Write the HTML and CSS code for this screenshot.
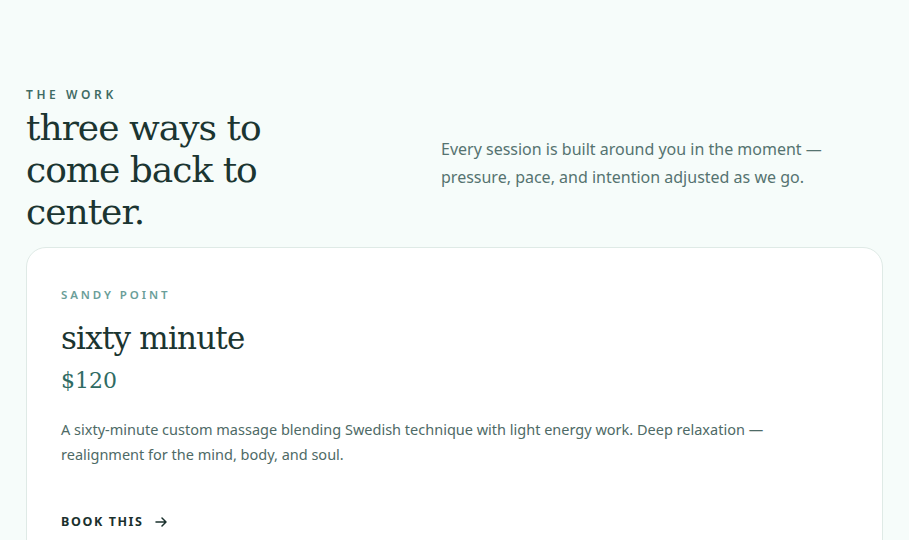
FILE: index.html
```html
<!DOCTYPE html>
<html lang="en">
  <head>
    <meta charset="UTF-8" />
    <meta name="viewport" content="width=device-width, initial-scale=1.0" />
    <title>The Work</title>
    <link rel="stylesheet" href="styles.css">
  </head>
  <body>
    <main class="work">
      <header class="work-head">
        <div>
          <p class="eyebrow">THE WORK</p>
          <h2 class="work-title">three ways to come back to center.</h2>
        </div>
        <p class="work-intro">
          Every session is built around you in the moment — pressure, pace, and intention adjusted as we go.
        </p>
      </header>

      <article class="offer">
        <p class="offer-place">SANDY POINT</p>
        <h3 class="offer-name">sixty minute</h3>
        <p class="offer-price">$120</p>
        <p class="offer-text">
          A sixty-minute custom massage blending Swedish technique with light energy work. Deep relaxation — realignment for the mind, body, and soul.
        </p>
        <a class="offer-link" href="#">
          BOOK THIS
          <svg class="arrow" width="12" height="12" viewBox="0 0 12 12" fill="none" stroke="currentColor" stroke-width="1.5" stroke-linecap="round" stroke-linejoin="round">
            <path d="M1 6h10M7 2l4 4-4 4" />
          </svg>
        </a>
      </article>
    </main>
  </body>
</html>
```

FILE: styles.css
```css
body {
  margin: 0;
  background-color: #f6fcfa;
  font-family: "Noto Sans", sans-serif;
  color: #1d3834;
}
.work {
  padding: 86px 26px 0;
}
.work-head {
  display: grid;
  grid-template-columns: 415px 1fr;
  align-items: center;
  margin-bottom: 14px;
}
.eyebrow {
  margin: 0 0 4px;
  font-size: 12px;
  font-weight: 600;
  letter-spacing: 3.6px;
  color: #3f6b64;
}
.work-title {
  margin: 0;
  max-width: 260px;
  font-family: "DejaVu Serif", serif;
  font-weight: normal;
  font-size: 36px;
  line-height: 42px;
  letter-spacing: -1px;
  color: #1b3531;
}
.work-intro {
  margin: 6px 0 0;
  max-width: 400px;
  font-size: 16px;
  line-height: 28px;
  color: #557370;
}
.offer {
  background-color: #fff;
  border: 1px solid #dfeae6;
  border-radius: 20px;
  padding: 39px 34px 60px;
}
.offer-place {
  margin: 0;
  font-size: 11.5px;
  font-weight: 600;
  letter-spacing: 2.9px;
  color: #6a9e99;
}
.offer-name {
  margin: 16px 0 0;
  font-family: "DejaVu Serif", serif;
  font-weight: normal;
  font-size: 31px;
  letter-spacing: -0.8px;
  line-height: 40px;
  color: #1b3531;
}
.offer-price {
  margin: 10px 0 0;
  font-family: "DejaVu Serif", serif;
  font-size: 22px;
  color: #2f6b63;
}
.offer-text {
  margin: 24px 0 0;
  max-width: 720px;
  font-size: 14.5px;
  line-height: 25px;
  color: #4e6a66;
}
.offer-link {
  display: inline-flex;
  align-items: center;
  gap: 11px;
  margin-top: 46px;
  font-size: 12.5px;
  font-weight: 700;
  letter-spacing: 1.6px;
  color: #1a302d;
  text-decoration: none;
}
```
